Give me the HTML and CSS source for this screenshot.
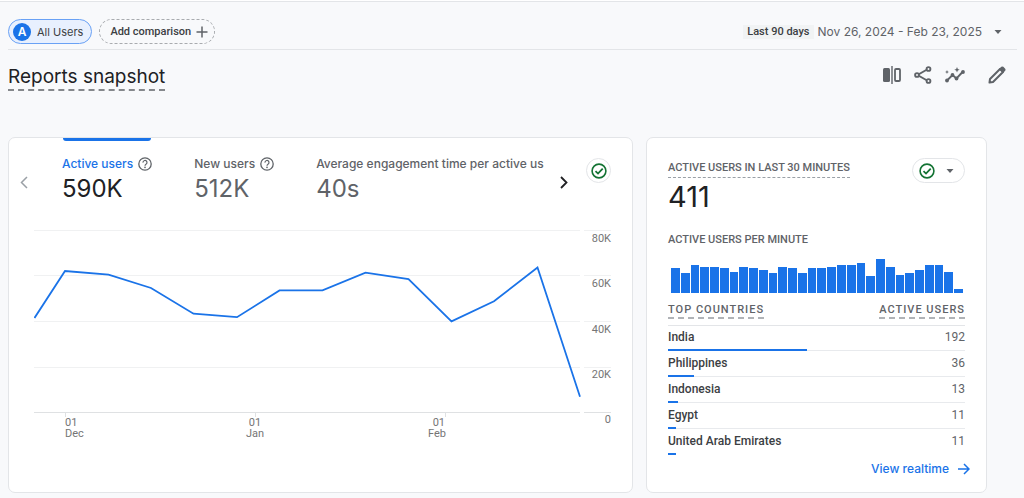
FILE: index.html
```
<!DOCTYPE html>
<html lang="en">
<head>
  <meta charset="UTF-8">
  <meta name="viewport" content="width=device-width, initial-scale=1.0">
  <title>Reports snapshot</title>
  <link rel="stylesheet" href="styles.css">
</head>
<body>
  <header class="topbar">
    <button class="chip chip--active" type="button"><span class="chip__badge">A</span>All Users</button>
    <button class="chip chip--add" type="button">Add comparison
      <svg width="12" height="12" viewBox="0 0 12 12"><path d="M6 0.5v11M0.5 6h11" stroke="#5f6368" stroke-width="1.5"/></svg>
    </button>
    <button class="date" type="button">
      <span class="date__label">Last 90 days</span>
      <span class="date__range">Nov 26, 2024 - Feb 23, 2025</span>
      <svg class="date__caret" width="8" height="4" viewBox="0 0 8 4"><path d="M0.5 0h7L4 4z" fill="#5f6368"/></svg>
    </button>
  </header>

  <div class="heading">
    <h1 class="heading__title">Reports snapshot</h1>
    <div class="tools">
      <button class="tools__btn" type="button" aria-label="Edit comparisons">
        <svg width="20" height="20" viewBox="0 0 20 20"><rect x="1" y="3" width="7" height="14" rx="1.5" fill="#5f6368"/><path d="M10 1v18" stroke="#5f6368" stroke-width="1.4"/><rect x="13" y="4" width="5" height="12" rx="1" fill="none" stroke="#5f6368" stroke-width="1.8"/></svg>
      </button>
      <button class="tools__btn" type="button" aria-label="Share this report">
        <svg width="20" height="20" viewBox="0 0 20 20" fill="none" stroke="#5f6368" stroke-width="1.9"><path d="M15 4L4.500 10L15 16"/><circle cx="15.500" cy="4" r="1.900" fill="#f8f9fa"/><circle cx="4" cy="10" r="1.900" fill="#f8f9fa"/><circle cx="15.500" cy="16" r="1.900" fill="#f8f9fa"/></svg>
      </button>
      <button class="tools__btn" type="button" aria-label="Insights">
        <svg width="22" height="20" viewBox="0 0 22 20"><path d="M3 15.500L8.500 10L12.500 13.500L19 6.500" fill="none" stroke="#5f6368" stroke-width="1.9"/><g fill="#5f6368"><circle cx="3" cy="15.500" r="1.900"/><circle cx="8.500" cy="10" r="1.900"/><circle cx="12.500" cy="13.500" r="1.900"/><circle cx="19" cy="7" r="1.900"/><path d="M13 2l.8 1.900 1.900.8-1.900.8L13 7.400l-.8-1.900-1.900-.8 1.900-.8zM3 5l.6 1.400L5 7l-1.400.6L3 9l-.6-1.400L1 7l1.400-.6z"/></g></svg>
      </button>
      <button class="tools__btn tools__btn--edit" type="button" aria-label="Customize report">
        <svg width="20" height="20" viewBox="0 0 20 20"><path d="M2.500 17.500l.5-3.500L13 4l3 3L6 17z" fill="none" stroke="#5f6368" stroke-width="2" stroke-linejoin="round"/><path d="M12 4l2.300-2.200q1-.8 2 0l1.900 1.900q.8 1 0 2L16 8z" fill="#5f6368"/></svg>
      </button>
    </div>
  </div>

  <main class="cards">
    <section class="card overview">
      <div class="metrics">
        <button class="arrow arrow--prev" type="button" aria-label="Previous">
          <svg width="8" height="13" viewBox="0 0 8 13"><path d="M7 1L1.500 6.500L7 12" fill="none" stroke="#9aa0a6" stroke-width="1.500"/></svg>
        </button>
        <div class="metrics__list">
          <button class="metric metric--active" type="button">
            <span class="metric__name">Active users
              <svg width="14" height="14" viewBox="0 0 14 14"><circle cx="7" cy="7" r="6.200" fill="none" stroke="#5f6368" stroke-width="1.300"/><path d="M5 5.600a2 2 0 1 1 3 1.600q-1 .6-1 1.500" fill="none" stroke="#5f6368" stroke-width="1.200"/><circle cx="7" cy="10.400" r=".8" fill="#5f6368"/></svg>
            </span>
            <span class="metric__value">590K</span>
          </button>
          <button class="metric" type="button">
            <span class="metric__name">New users
              <svg width="14" height="14" viewBox="0 0 14 14"><circle cx="7" cy="7" r="6.200" fill="none" stroke="#5f6368" stroke-width="1.300"/><path d="M5 5.600a2 2 0 1 1 3 1.600q-1 .6-1 1.500" fill="none" stroke="#5f6368" stroke-width="1.200"/><circle cx="7" cy="10.400" r=".8" fill="#5f6368"/></svg>
            </span>
            <span class="metric__value">512K</span>
          </button>
          <button class="metric metric--last" type="button">
            <span class="metric__name">Average engagement time per active us</span>
            <span class="metric__value">40s</span>
          </button>
        </div>
        <button class="arrow arrow--next" type="button" aria-label="Next">
          <svg width="8" height="13" viewBox="0 0 8 13"><path d="M1 1L6.500 6.500L1 12" fill="none" stroke="#202124" stroke-width="1.800"/></svg>
        </button>
        <button class="status" type="button" aria-label="Data quality">
          <svg width="16" height="16" viewBox="0 0 16 16" fill="none" stroke="#137333"><circle cx="8" cy="8" r="6.900" stroke-width="1.600"/><path d="M4.500 8.200l2.500 2.400 4.700-4.900" stroke-width="1.800"/></svg>
        </button>
      </div>

      <svg class="chart" viewBox="0 0 578 218" role="img" aria-label="Active users over time">
        <path class="chart__grid" d="M0 5.500h546M550 5.500h27M0 50.500h546M550 50.500h27M0 96.500h546M550 96.500h27M0 142.500h546M550 142.500h27"/>
        <path class="chart__axis" d="M0 187.500h546M550 187.500h27M31.500 187v5M221.500 187v5M411.500 187v5"/>
        <polyline class="chart__line" points="0.500,93 31,46 74.500,49.700 117,63 159.500,88.700 203,92.200 245.500,65.400 288.500,65.400 331.500,47.700 374.500,54 417.500,96.300 460,76.300 503.500,42.500 546,171.700"/>
        <g class="chart__label chart__label--end">
          <text x="577" y="17">80K</text>
          <text x="577" y="62">60K</text>
          <text x="577" y="108">40K</text>
          <text x="577" y="153">20K</text>
          <text x="577" y="198">0</text>
          <text x="411" y="201">01</text>
          <text x="412" y="212">Feb</text>
        </g>
        <g class="chart__label">
          <text x="31" y="201">01</text>
          <text x="31" y="212">Dec</text>
        </g>
        <g class="chart__label chart__label--mid">
          <text x="221" y="201">01</text>
          <text x="221" y="212">Jan</text>
        </g>
      </svg>
    </section>

    <section class="card realtime">
      <div class="realtime__head">
        <div>
          <h2 class="label label--dashed">ACTIVE USERS IN LAST 30 MINUTES</h2>
          <p class="realtime__total">411</p>
        </div>
        <button class="status status--menu" type="button" aria-label="Data quality">
          <svg width="16" height="16" viewBox="0 0 16 16" fill="none" stroke="#137333"><circle cx="8" cy="8" r="6.900" stroke-width="1.600"/><path d="M4.500 8.200l2.500 2.400 4.700-4.900" stroke-width="1.800"/></svg>
          <svg width="8" height="4" viewBox="0 0 8 4"><path d="M0.500 0h7L4 4z" fill="#5f6368"/></svg>
        </button>
      </div>
      <h3 class="label">ACTIVE USERS PER MINUTE</h3>
      <div class="bars">
        <i style="height:25px"></i><i style="height:20px"></i><i style="height:28px"></i><i style="height:26px"></i><i style="height:26px"></i>
        <i style="height:25px"></i><i style="height:21px"></i><i style="height:26px"></i><i style="height:25px"></i><i style="height:23px"></i>
        <i style="height:20px"></i><i style="height:26px"></i><i style="height:25px"></i><i style="height:20px"></i><i style="height:25px"></i>
        <i style="height:25px"></i><i style="height:26px"></i><i style="height:28px"></i><i style="height:28px"></i><i style="height:30px"></i>
        <i style="height:17px"></i><i style="height:34px"></i><i style="height:26px"></i><i style="height:18px"></i><i style="height:20px"></i>
        <i style="height:23px"></i><i style="height:28px"></i><i style="height:28px"></i><i style="height:21px"></i><i style="height:4px"></i>
      </div>

      <table class="countries">
        <thead>
          <tr><th scope="col"><span>TOP COUNTRIES</span></th><th scope="col"><span>ACTIVE USERS</span></th></tr>
        </thead>
        <tbody>
          <tr><td>India</td><td>192</td></tr>
          <tr class="countries__track"><td colspan="2"><div style="width:46.700%"></div></td></tr>
          <tr><td>Philippines</td><td>36</td></tr>
          <tr class="countries__track"><td colspan="2"><div style="width:8.800%"></div></td></tr>
          <tr><td>Indonesia</td><td>13</td></tr>
          <tr class="countries__track"><td colspan="2"><div style="width:3.200%"></div></td></tr>
          <tr><td>Egypt</td><td>11</td></tr>
          <tr class="countries__track"><td colspan="2"><div style="width:2.700%"></div></td></tr>
          <tr><td>United Arab Emirates</td><td>11</td></tr>
          <tr class="countries__track"><td colspan="2"><div style="width:2.700%"></div></td></tr>
        </tbody>
      </table>
      <a class="more" href="#">View realtime
        <svg width="12" height="12" viewBox="0 0 12 12"><path d="M0 6h11M6 1l5 5-5 5" fill="none" stroke="#1a73e8" stroke-width="1.500"/></svg>
      </a>
    </section>
  </main>
</body>
</html>
```
FILE: styles.css
```
* {
  box-sizing: border-box;
}
body {
  margin: 0;
  border-top: 1px solid #fff;
  background: #f8f9fb;
  color: #3c4043;
  font-family: Roboto, "Liberation Sans", sans-serif;
  font-size: 12px;
}
h1, h2, h3, p {
  margin: 0;
}
button {
  padding: 0;
  border: 0;
  background: none;
  color: inherit;
  font: inherit;
  cursor: pointer;
}
svg {
  display: block;
  flex-shrink: 0;
}

/* top bar */
.topbar {
  position: relative;
  display: flex;
  align-items: center;
  gap: 7px;
  height: 49px;
  margin: 0 7px 0 8px;
  padding-top: 13px;
  border-bottom: 1px solid #e3e5e8;
}
.topbar::before {
  content: "";
  position: absolute;
  top: 0;
  left: -8px;
  right: -7px;
  height: 1px;
  background: #e3e5e8;
}
.chip {
  display: flex;
  align-items: center;
  height: 25px;
  border-radius: 13px;
  font-family: Inter, sans-serif;
  font-size: 11px;
}
.chip--active {
  gap: 6px;
  padding: 0 8px 0 4px;
  border: 1px solid #69a1f5;
  background: #e8f0fe;
}
.chip__badge {
  width: 18px;
  height: 18px;
  border-radius: 50%;
  background: #1a73e8;
  color: #fff;
  font-size: 12px;
  font-weight: 600;
  line-height: 18px;
}
.chip--add {
  gap: 5px;
  padding: 0 6px 0 10px;
  border: 1px dashed #a8abaf;
  font-family: Roboto, sans-serif;
  font-weight: 500;
}
.date {
  display: flex;
  align-items: center;
  margin-left: auto;
  padding-right: 15px;
  color: #5f6368;
}
.date__label {
  padding: 0 4px;
  background: #f1f3f4;
  color: #3c4043;
  font-size: 11px;
  font-weight: 500;
  line-height: 14px;
}
.date__range {
  margin-left: 4px;
  font-family: Inter, sans-serif;
  font-size: 12px;
}
.date__caret {
  margin-left: 12px;
}

/* page heading */
.heading {
  display: flex;
  justify-content: space-between;
  height: 87px;
  padding: 14px 17px 0 8px;
}
.heading__title {
  height: 27px;
  border-bottom: 2px dashed #85888c;
  color: #202124;
  font-family: Inter, sans-serif;
  font-size: 19px;
  font-weight: 400;
  line-height: 26px;
}
.tools {
  display: flex;
  align-items: center;
  gap: 11px;
  height: 22px;
}
.tools__btn--edit {
  margin-left: 10px;
}

/* cards */
.cards {
  display: grid;
  grid-template-columns: 625fr 341fr;
  gap: 13px;
  padding: 0 37px 5px 8px;
}
.card {
  min-width: 0;
  border: 1px solid #e3e5e8;
  border-radius: 7px;
  background: #fff;
}
.overview {
  padding: 0 21px 0 11px;
}
.metrics {
  display: flex;
}
.metrics__list {
  flex: 1;
  display: flex;
  gap: 42px;
  min-width: 0;
  margin-left: 34px;
  font-family: Inter, sans-serif;
}
.metric {
  display: flex;
  flex-direction: column;
  position: relative;
  padding-top: 17px;
  color: #5f6368;
  text-align: left;
  white-space: nowrap;
}
.metric__name {
  display: flex;
  align-items: center;
  gap: 5px;
  font-size: 12px;
  font-weight: 500;
  line-height: 18px;
}
.metric__value {
  font-size: 24px;
  line-height: 32px;
}
.metric--active .metric__name {
  color: #1a73e8;
}
.metric--active .metric__value {
  color: #202124;
}
.metric--active::before {
  content: "";
  position: absolute;
  top: 0;
  left: 1px;
  right: 1px;
  height: 3px;
  border-radius: 0 0 3px 3px;
  background: #1a73e8;
}
.metric--last {
  flex: 1;
  min-width: 0;
  overflow: hidden;
}
.arrow {
  align-self: flex-start;
  margin-top: 38px;
}
.arrow--next {
  margin-left: 12px;
}
.status {
  display: flex;
  align-items: center;
  justify-content: center;
  width: 25px;
  height: 25px;
  margin: 20px 0 0 18px;
  border: 1px solid #e3e5e8;
  border-radius: 13px;
}
.chart {
  width: calc(100% - 13px);
  margin: 20px 0 0 14px;
}
.chart__grid,
.chart__axis {
  fill: none;
  stroke: #f0f1f2;
}
.chart__axis {
  stroke: #dfe1e3;
}
.chart__line {
  fill: none;
  stroke: #1a73e8;
  stroke-width: 1.8;
}
.chart__label {
  fill: #757575;
  font-size: 11px;
}
.chart__label--end {
  text-anchor: end;
}
.chart__label--mid {
  text-anchor: middle;
}

/* realtime */
.realtime {
  padding: 0 21px 14px;
}
.realtime__head {
  display: flex;
  justify-content: space-between;
  height: 93px;
}
.label {
  color: #5f6368;
  font-size: 11px;
  font-weight: 500;
  line-height: 18px;
}
.label--dashed {
  margin-top: 21px;
  border-bottom: 1px dashed #9aa0a6;
}
.realtime__total {
  color: #202124;
  font-family: Inter, sans-serif;
  font-size: 29px;
  line-height: 38px;
}
.status--menu {
  justify-content: flex-start;
  gap: 11px;
  width: 53px;
  margin-left: 0;
  padding-left: 6px;
}
.bars {
  display: flex;
  align-items: flex-end;
  gap: 1px;
  height: 44px;
  padding: 0 2px 0 3px;
}
.bars i {
  flex: 1;
  background: #1a73e8;
}
.countries {
  width: 100%;
  margin-top: 7px;
  border-collapse: collapse;
}
.countries th {
  height: 25px;
  padding: 0;
  border-bottom: 1px solid #e3e5e8;
  color: #5f6368;
  font-size: 11px;
  font-weight: 500;
  letter-spacing: 1px;
  text-align: left;
  vertical-align: top;
}
.countries th span {
  display: inline-block;
  padding-top: 3px;
  border-bottom: 2px dashed #b0b3b7;
  line-height: 14px;
}
.countries td {
  height: 24px;
  padding: 0;
  font-weight: 500;
}
.countries th:last-child,
.countries td:last-child {
  text-align: right;
}
.countries td:last-child {
  color: #5f6368;
  font-weight: 400;
}
.countries .countries__track td {
  height: 2px;
  box-shadow: inset 0 -1px #e8eaed;
}
.countries__track:last-child td {
  box-shadow: none;
}
.countries .countries__track:last-child td {
  box-shadow: none;
}
.countries__track div {
  height: 2px;
  background: #1a73e8;
}
.more {
  display: flex;
  align-items: center;
  justify-content: flex-end;
  gap: 9px;
  margin: 5px -5px 0 0;
  color: #1a73e8;
  font-family: Inter, sans-serif;
  font-size: 12px;
  font-weight: 500;
  line-height: 18px;
  text-decoration: none;
}
```
